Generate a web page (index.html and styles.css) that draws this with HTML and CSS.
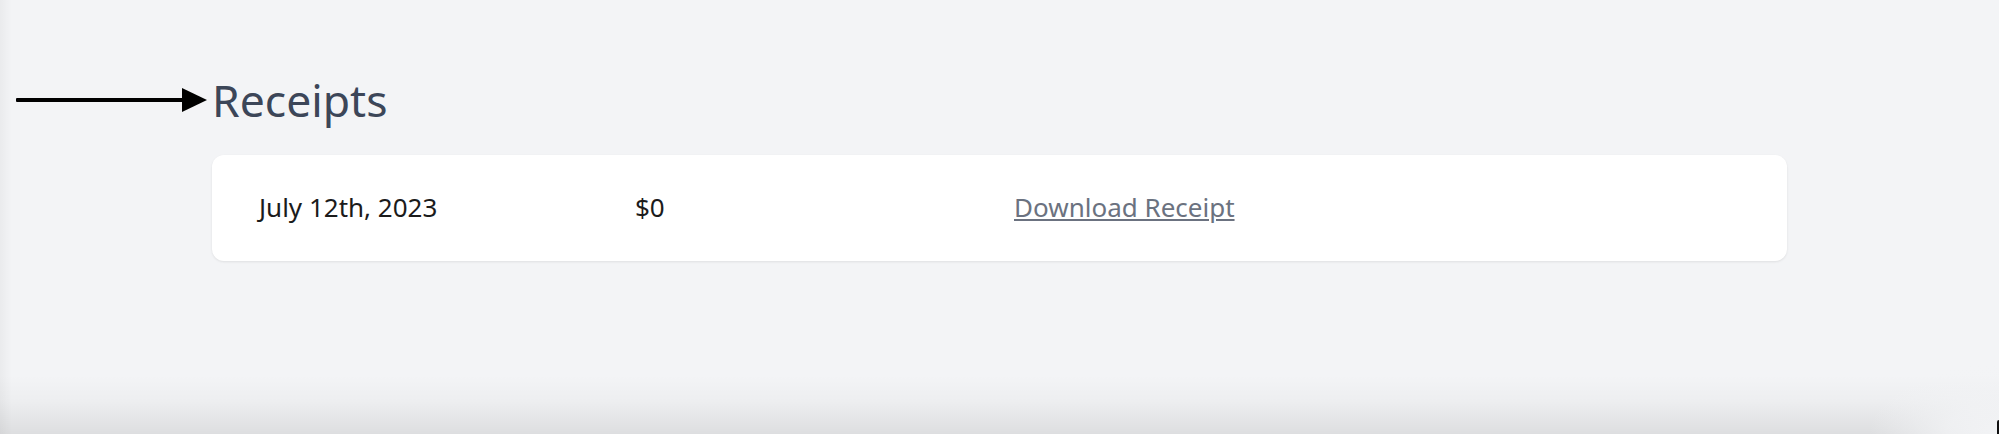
FILE: index.html
```html
<!DOCTYPE html>
<html lang="en">
<head>
<meta charset="utf-8">
<title>Receipts</title>
<link rel="stylesheet" href="styles.css">
</head>
<body>
<main class="page">
  <header class="title-row">
    <svg class="pointer" width="191" height="24" viewBox="0 0 191 24" aria-hidden="true">
      <rect x="0" y="10" width="170" height="4" rx="1" fill="#000"/>
      <polygon points="166,0 191,12 166,24" fill="#000"/>
    </svg>
    <h1 class="title">Receipts</h1>
  </header>
  <section class="receipts">
    <div class="receipt-card">
      <span class="cell date">July 12th, 2023</span>
      <span class="cell amount">$0</span>
      <a class="cell download" href="#">Download Receipt</a>
    </div>
  </section>
</main>
</body>
</html>
```
FILE: styles.css
```css
html {
  min-height: 100%;
  background-color: #f3f4f6;
  background-image:
    radial-gradient(ellipse 130px 70px at 100% 100%, #f2f3f5 0%, rgba(242,243,245,0.8) 40%, rgba(242,243,245,0) 100%),
    linear-gradient(to bottom, rgba(0,0,0,0) 375px, rgba(0,0,0,0.025) 400px, rgba(0,0,0,0.09) 434px),
    linear-gradient(to right, rgba(0,0,0,0.04) 0px, rgba(0,0,0,0) 12px);
  background-repeat: no-repeat;
}

body {
  margin: 0;
  min-height: 434px;
  font-family: "Noto Sans", "Open Sans", sans-serif;
  color: #1a1a1a;
  position: relative;
}

body::after {
  content: "";
  position: absolute;
  right: 0;
  bottom: 0;
  width: 2px;
  height: 14px;
  background: #111;
  border-top-left-radius: 2px;
}

.page {
  padding-top: 73px;
}

.title-row {
  display: flex;
  align-items: center;
  gap: 5px;
  padding-left: 16px;
  margin-bottom: 28px;
}

.pointer {
  flex: none;
  display: block;
}

.title {
  margin: 0;
  font-size: 44.5px;
  line-height: 54px;
  font-weight: 400;
  color: #3c4658;
}

.receipts {
  margin: 0 212px;
}

.receipt-card {
  display: grid;
  grid-template-columns: 376px 379px 1fr;
  align-items: center;
  padding: 34px 47px 36px;
  background: #ffffff;
  border-radius: 12px;
  box-shadow: 0 1px 3px rgba(0,0,0,0.06), 0 1px 2px rgba(0,0,0,0.03);
}

.cell {
  font-size: 26px;
  line-height: 36px;
  white-space: nowrap;
}

.date,
.amount {
  color: #1b1b1b;
}

.download {
  justify-self: start;
  color: #6b7280;
  text-decoration: underline;
  text-decoration-thickness: 2px;
  text-underline-offset: 2px;
}
```
